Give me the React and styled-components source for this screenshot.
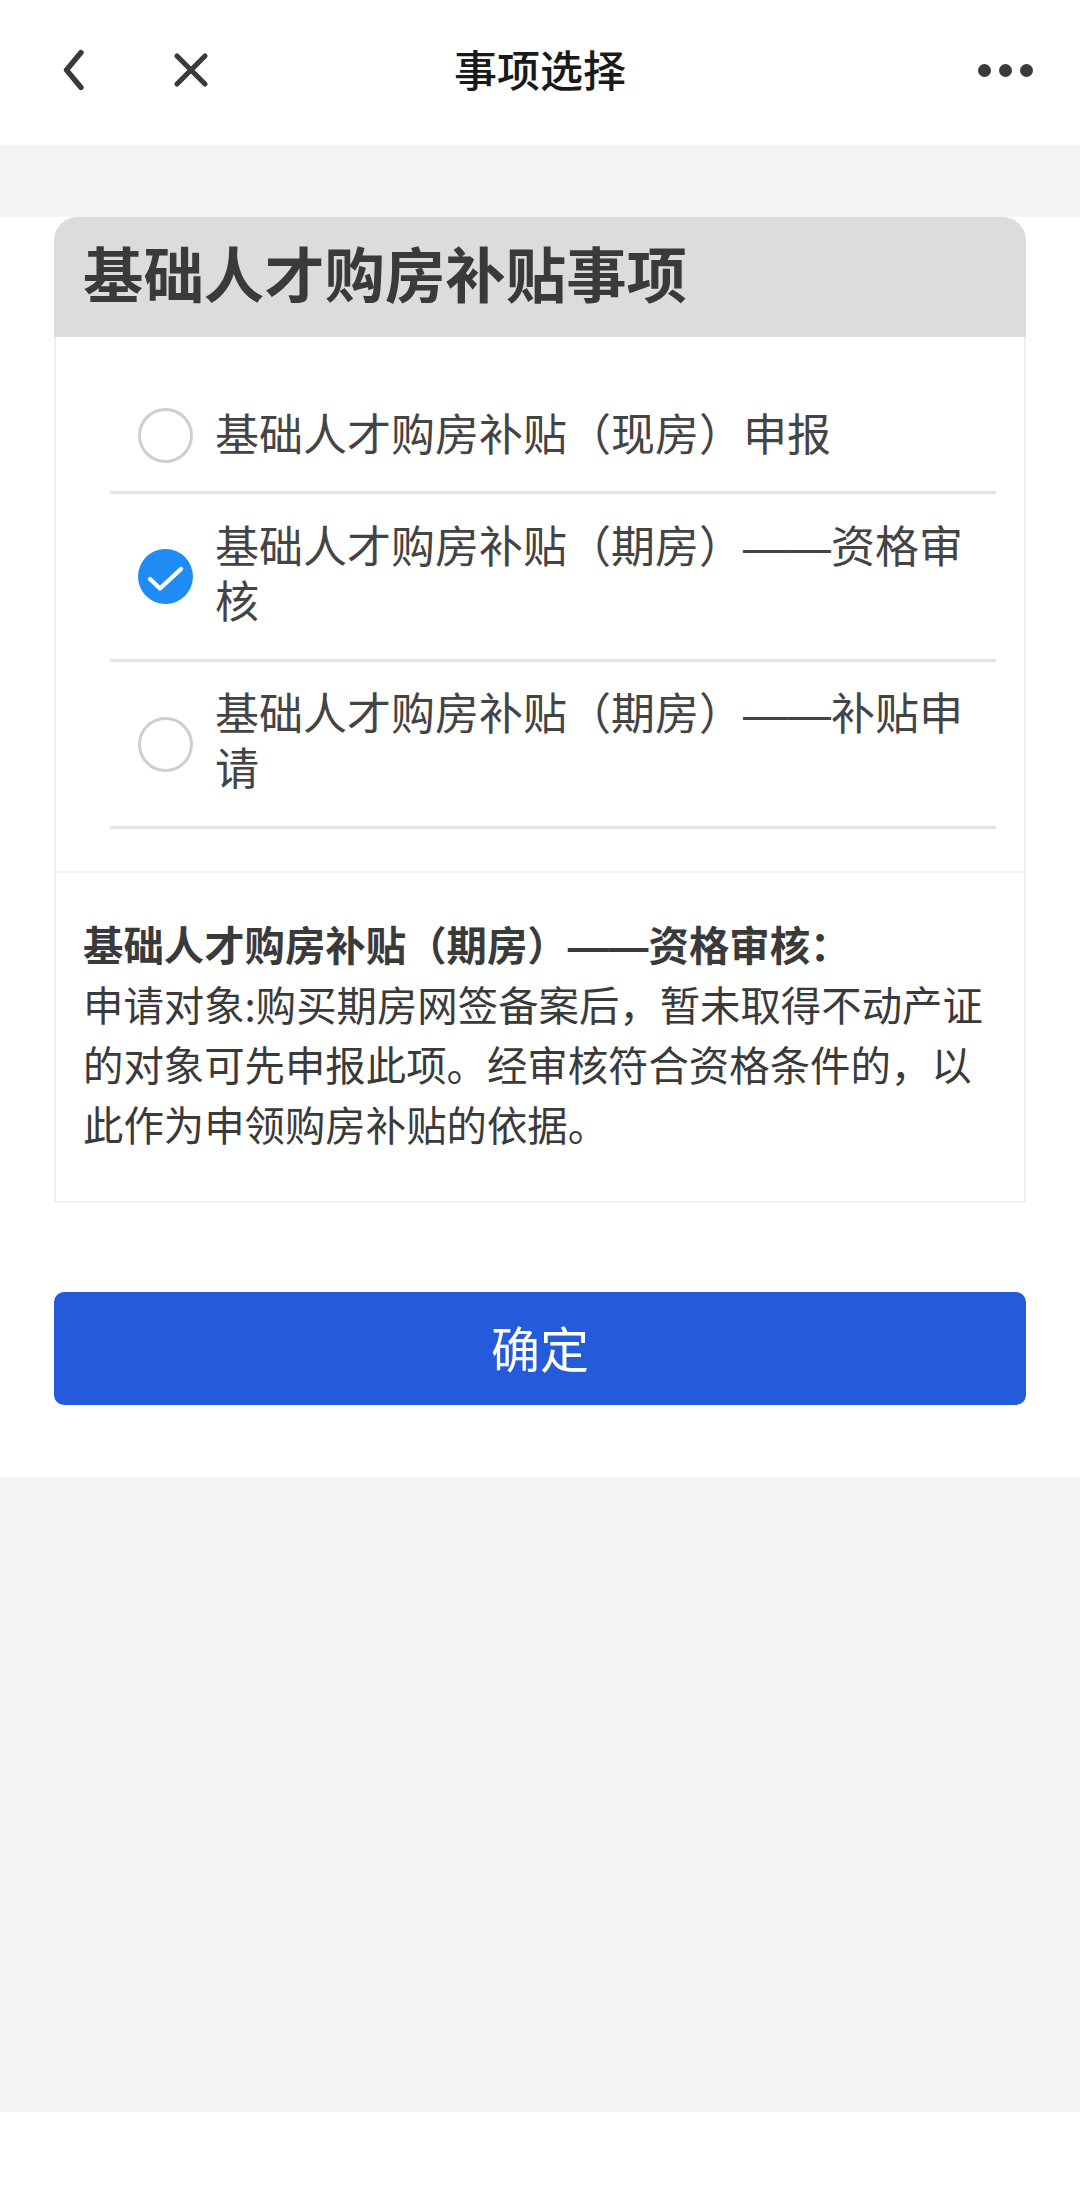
import React from "react";
import styled, { createGlobalStyle } from "styled-components";

const items = [
    { id: 1, before: "基础人才购房补贴（现房）申报", checked: false },
    { id: 2, before: "基础人才购房补贴（期房）", after: "资格审核", checked: true },
    { id: 3, before: "基础人才购房补贴（期房）", after: "补贴申请", checked: false },
];

const App = () => {
    return (
        <Page lang="zh-CN">
            <GlobalStyle />
            <TopBar>
                <NavIcons>
                    <svg width="24" height="42" viewBox="0 0 24 42" fill="none">
                        <path d="M19 3.5 L4.5 21 L19 38.5" stroke="#3a3a3a" strokeWidth="5.4" strokeLinecap="round" strokeLinejoin="round" />
                    </svg>
                    <svg width="36" height="36" viewBox="0 0 36 36" fill="none">
                        <path d="M4 4 L32 32 M32 4 L4 32" stroke="#3a3a3a" strokeWidth="5.2" strokeLinecap="round" />
                    </svg>
                </NavIcons>
                <NavTitle>事项选择</NavTitle>
                <Dots>
                    <Dot />
                    <Dot />
                    <Dot />
                </Dots>
            </TopBar>
            <GrayBand />
            <Content>
                <Card>
                    <CardHead>基础人才购房补贴事项</CardHead>
                    <OptionList>
                        {items.map((item) => (
                            <Option key={item.id}>
                                <Radio $checked={item.checked}>
                                    {item.checked && (
                                        <svg width="55" height="55" viewBox="0 0 55 55" fill="none">
                                            <path d="M12 30 L22 39.5 L43 20" stroke="#fff" strokeWidth="4.4" strokeLinecap="round" strokeLinejoin="round" />
                                        </svg>
                                    )}
                                </Radio>
                                <OptionText>
                                    {item.before}
                                    {item.after && <Dash>——</Dash>}
                                    {item.after}
                                </OptionText>
                            </Option>
                        ))}
                    </OptionList>
                    <Desc>
                        <DescTitle>基础人才购房补贴（期房）<Dash>——</Dash>资格审核：</DescTitle>
                        <DescText>申请对象:购买期房网签备案后，暂未取得不动产证的对象可先申报此项。经审核符合资格条件的，以此作为申领购房补贴的依据。</DescText>
                    </Desc>
                </Card>
                <SubmitButton>确定</SubmitButton>
            </Content>
            <Filler />
            <BottomBar />
        </Page>
    );
};

const GlobalStyle = createGlobalStyle`
    html, body {
        margin: 0;
        padding: 0;
        background: #fff;
    }
    * {
        box-sizing: border-box;
    }
`;

const Page = styled.div`
    display: flex;
    flex-direction: column;
    width: 1080px;
    height: 2191px;
    overflow: hidden;
    font-family: "Noto Sans CJK SC", "Liberation Sans", sans-serif;
    color: #3a3a3a;
`;

const TopBar = styled.header`
    position: relative;
    display: flex;
    justify-content: space-between;
    align-items: center;
    height: 145px;
    padding: 0 47px 5px 62px;
    background: #fff;
`;

const NavIcons = styled.div`
    display: flex;
    align-items: center;
    gap: 87px;
`;

const NavTitle = styled.h1`
    position: absolute;
    top: 38px;
    left: 0;
    right: 0;
    margin: 0;
    text-align: center;
    font-size: 43px;
    line-height: 60px;
    font-weight: 500;
    color: #1a1a1a;
    pointer-events: none;
`;

const Dots = styled.div`
    display: flex;
    gap: 8px;
`;

const Dot = styled.span`
    width: 13px;
    height: 13px;
    border-radius: 50%;
    background: #3a3a3a;
`;

const GrayBand = styled.div`
    height: 72px;
    background: #f3f3f3;
`;

const Content = styled.main`
    height: 1260px;
    padding: 0 54px;
    background: #fff;
`;

const Card = styled.section`
    height: 986px;
    border: 2px solid #f0f0f0;
    border-top: 0;
    border-radius: 24px 24px 0 0;
`;

const CardHead = styled.div`
    display: flex;
    align-items: center;
    height: 120px;
    margin: 0 -2px;
    padding: 0 29px 10px;
    border-radius: 24px 24px 0 0;
    background: #dcdcdc;
    font-size: 60.4px;
    font-weight: 700;
    line-height: 1;
`;

const OptionList = styled.div`
    padding: 42px 28px 42px 54px;
    border-bottom: 2px solid #f0f0f0;
`;

const OptionText = styled.span`
    padding-bottom: 10px;
    font-size: 44px;
    line-height: 55px;
    color: #444;
`;

const Option = styled.label`
    display: flex;
    align-items: center;
    gap: 22px;
    min-height: 168px;
    padding-left: 28px;
    border-bottom: 3px solid #e4e4e4;

    &:first-child {
        min-height: 115px;
    }
    &:first-child ${OptionText} {
        padding-bottom: 6px;
    }
    &:last-child {
        min-height: 167px;
    }
`;

const Radio = styled.span`
    flex: none;
    display: flex;
    align-items: center;
    justify-content: center;
    width: 55px;
    height: 55px;
    border-radius: 50%;
    border: ${(p) => (p.$checked ? "0" : "3px solid #cfcfcf")};
    background: ${(p) => (p.$checked ? "#1f8bf5" : "#fff")};
`;

/* the em dash of the CJK font is too short, this one is a full 1em */
const Dash = styled.span`
    font-family: "Liberation Sans", sans-serif;
    line-height: 0;
`;

const Desc = styled.div`
    padding: 41px 28px 0 27px;
    font-size: 40.4px;
    line-height: 60px;
`;

const DescTitle = styled.div`
    font-weight: 700;
`;

const DescText = styled.div`
    font-weight: 400;
`;

const SubmitButton = styled.button`
    display: block;
    width: 100%;
    height: 113px;
    margin-top: 89px;
    padding: 0 0 4px;
    border: 0;
    border-radius: 10px;
    background: #245bdb;
    color: #fff;
    font-family: inherit;
    font-size: 49px;
`;

const Filler = styled.div`
    flex: 1;
    background: #f3f3f3;
`;

const BottomBar = styled.div`
    height: 79px;
    background: #fff;
`;

export default App;
